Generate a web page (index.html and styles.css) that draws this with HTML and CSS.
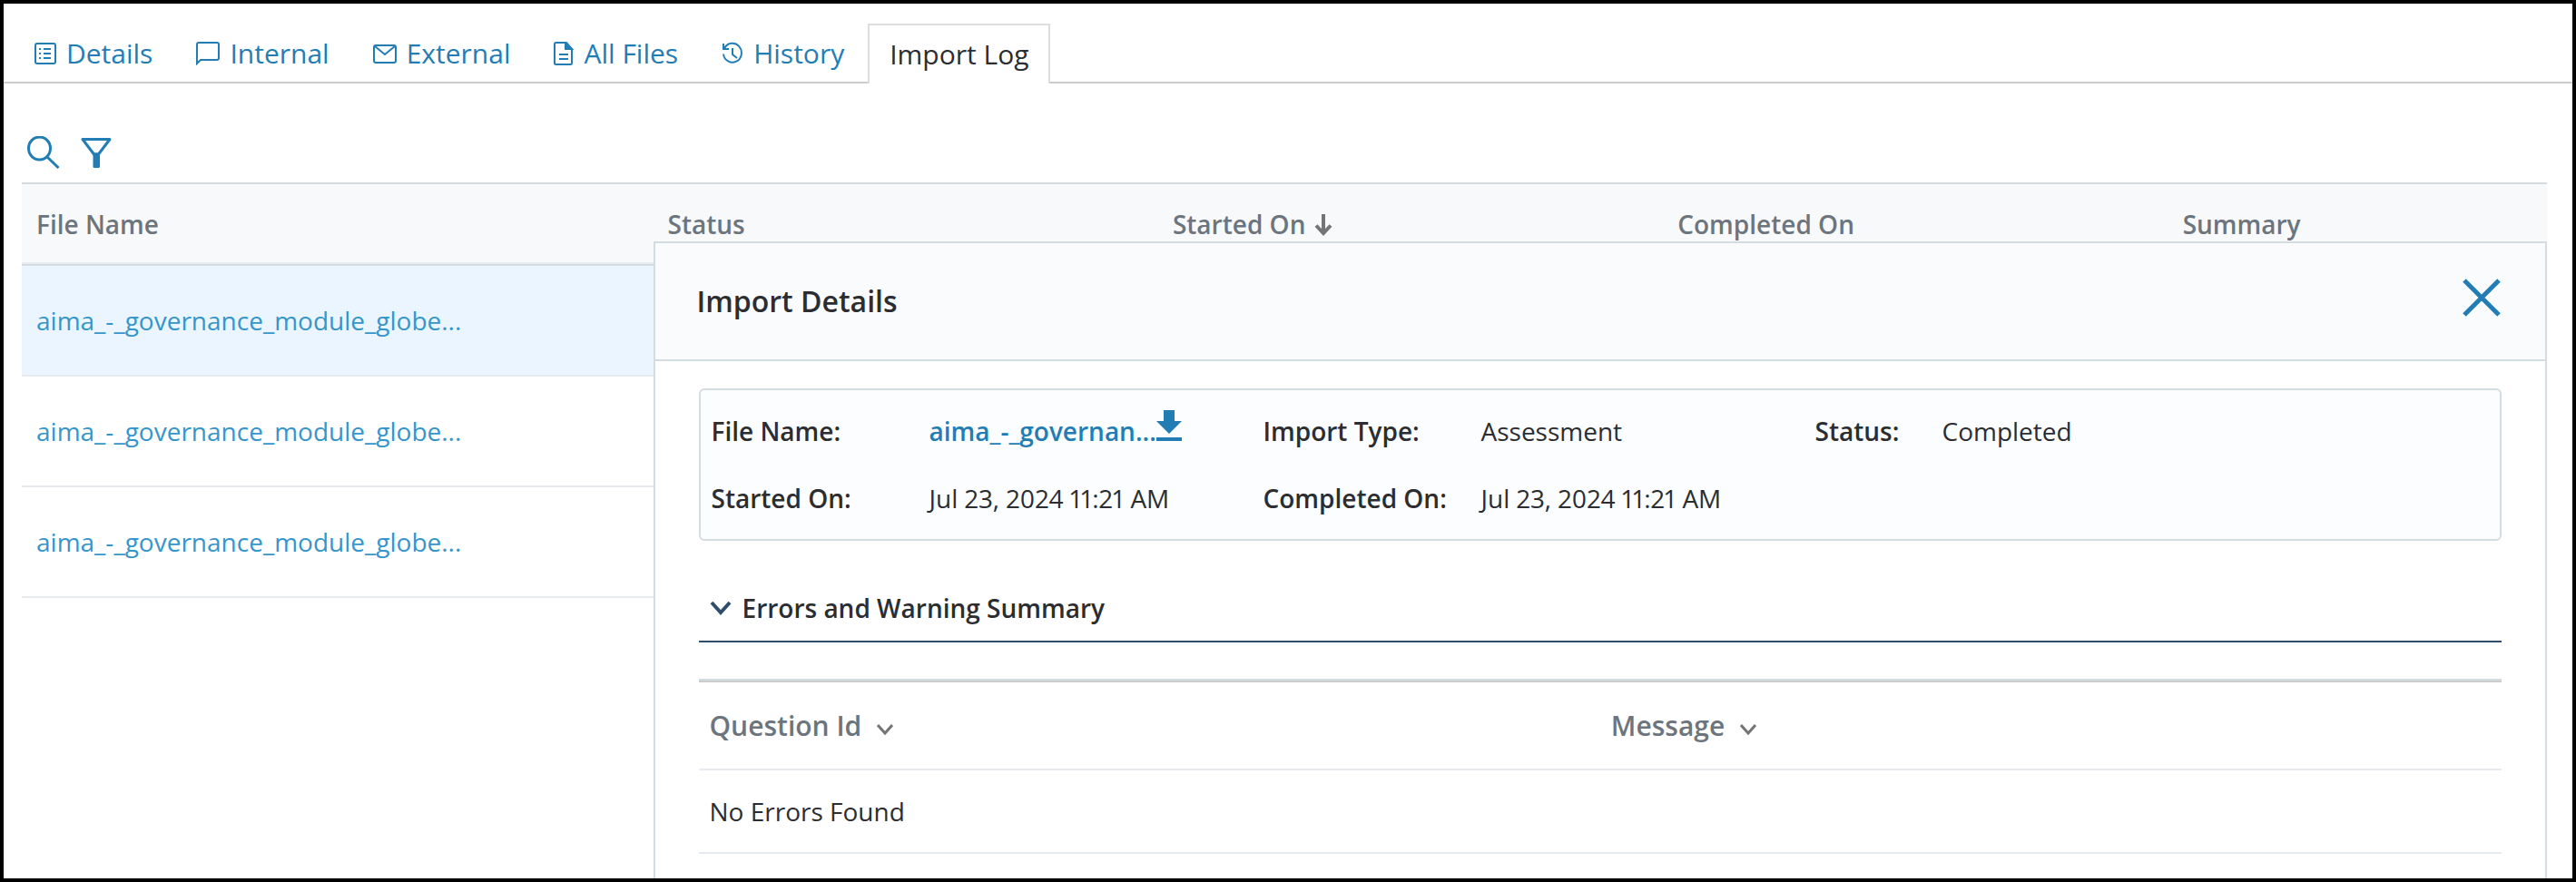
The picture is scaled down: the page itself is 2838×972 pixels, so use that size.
FILE: index.html
```html
<!DOCTYPE html>
<html lang="en">

<head>
    <meta charset="UTF-8">
    <meta name="viewport" content="width=device-width, initial-scale=1.0">
    <title>Import Log</title>
    <link rel="stylesheet" href="styles.css">
</head>

<body>
    <nav class="tabs">
        <a class="tab" href="#details">
            <svg width="24" height="26" viewBox="0 0 24 26" fill="none" stroke="currentColor" stroke-width="2">
                <rect x="1" y="2" width="22" height="22" rx="2" />
                <path d="M5 8h2M5 13h2M5 18h2M10 8h8M10 13h8M10 18h8" />
            </svg>
            Details
        </a>
        <a class="tab" href="#internal">
            <svg width="26" height="26" viewBox="0 0 26 26" fill="none" stroke="currentColor" stroke-width="2">
                <path d="M1 24V3q0-2 2-2h20q2 0 2 2v15q0 2-2 2H5z" />
            </svg>
            Internal
        </a>
        <a class="tab" href="#external">
            <svg width="26" height="26" viewBox="0 0 26 26" fill="none" stroke="currentColor" stroke-width="2">
                <rect x="1" y="4" width="24" height="19" rx="2" />
                <path d="M2 5l11 9 11-9" />
            </svg>
            External
        </a>
        <a class="tab" href="#files">
            <svg width="22" height="26" viewBox="0 0 22 26" fill="none" stroke="currentColor" stroke-width="2">
                <path d="M1 2.500q0-1.500 1.500-1.500H14l6 7v15.500q0 1.500-1.500 1.500h-16q-1.500 0-1.500-1.500z" />
                <path d="M13 1v7h7z" fill="currentColor" />
                <path d="M6 14h10M6 19h10" />
            </svg>
            All Files
        </a>
        <a class="tab" href="#history">
            <svg width="24" height="26" viewBox="0 0 24 26" fill="none" stroke="currentColor" stroke-width="2">
                <path d="M3 7.500A10 10.500 0 1 1 2 13.500M2 2v6h6M12 7v7l5 4" />
            </svg>
            History
        </a>
        <a class="tab active" href="#log">Import Log</a>
    </nav>

    <main class="content">
        <div class="toolbar">
            <button type="button" aria-label="Search">
                <svg width="36" height="36" viewBox="0 0 36 36" fill="none" stroke="currentColor" stroke-width="3">
                    <ellipse cx="13.500" cy="13.500" rx="12" ry="12.500" />
                    <path d="M21.500 22.500L34.500 35" />
                </svg>
            </button>
            <button type="button" aria-label="Filter">
                <svg width="34" height="36" viewBox="0 0 34 36" fill="none" stroke="currentColor" stroke-width="3" stroke-linejoin="round">
                    <path d="M2 3.500h30L19.500 20H14.500z" />
                    <path d="M15 20h4.500v13.500H15z" fill="currentColor" />
                </svg>
            </button>
        </div>

        <div class="log">
            <table class="log-table">
                <thead>
                    <tr>
                        <th class="col-file">File Name</th>
                        <th class="col-mid">Status</th>
                        <th class="col-mid">Started On
                            <svg width="20" height="24" viewBox="0 0 20 24" fill="none" stroke="#757575" stroke-width="4">
                                <path d="M10 0v20M2 12.500l8 8.500 8-8.500" />
                            </svg>
                        </th>
                        <th class="col-mid">Completed On</th>
                        <th>Summary</th>
                    </tr>
                </thead>
                <tbody>
                    <tr class="selected">
                        <td colspan="5"><a href="#import1">aima_-_governance_module_globe...</a></td>
                    </tr>
                    <tr>
                        <td colspan="5"><a href="#import2">aima_-_governance_module_globe...</a></td>
                    </tr>
                    <tr>
                        <td colspan="5"><a href="#import3">aima_-_governance_module_globe...</a></td>
                    </tr>
                </tbody>
            </table>

            <section class="panel">
                <header class="panel-header">
                    <h2>Import Details</h2>
                    <button type="button" aria-label="Close">
                        <svg width="42" height="42" viewBox="0 0 42 42" fill="none" stroke="currentColor" stroke-width="5">
                            <path d="M2 2l38 38M40 2L2 40" />
                        </svg>
                    </button>
                </header>

                <div class="panel-body">
                    <dl class="info">
                        <dt>File Name:</dt>
                        <dd>
                            <a class="download" href="#download">aima_-_governan...<svg width="28" height="34" viewBox="0 0 28 34" fill="currentColor">
                                    <path d="M8 0h12v12h8L14 26 0 12h8zM0 30h28v4H0z" />
                                </svg></a>
                        </dd>
                        <dt>Import Type:</dt>
                        <dd>Assessment</dd>
                        <dt>Status:</dt>
                        <dd>Completed</dd>
                        <dt>Started On:</dt>
                        <dd>Jul 23, 2024 11:21 AM</dd>
                        <dt>Completed On:</dt>
                        <dd>Jul 23, 2024 11:21 AM</dd>
                    </dl>

                    <h3 class="summary-title">
                        <button type="button">
                            <svg width="24" height="16" viewBox="0 0 24 16" fill="none" stroke="#304d6d" stroke-width="4">
                                <path d="M2 2l10 11L22 2" />
                            </svg>
                            Errors and Warning Summary
                        </button>
                    </h3>

                    <table class="errors">
                        <thead>
                            <tr>
                                <th>Question Id
                                    <svg width="18" height="12" viewBox="0 0 18 12" fill="none" stroke="#757575" stroke-width="3">
                                        <path d="M1 1l8 9 8-9" />
                                    </svg>
                                </th>
                                <th>Message
                                    <svg width="18" height="12" viewBox="0 0 18 12" fill="none" stroke="#757575" stroke-width="3">
                                        <path d="M1 1l8 9 8-9" />
                                    </svg>
                                </th>
                            </tr>
                        </thead>
                        <tbody>
                            <tr>
                                <td colspan="2">No Errors Found</td>
                            </tr>
                        </tbody>
                    </table>
                </div>
            </section>
        </div>
    </main>
</body>

</html>
```
FILE: styles.css
```css
* {
    margin: 0;
    padding: 0;
    box-sizing: border-box;
}

body {
    display: flex;
    flex-direction: column;
    min-height: 100vh;
    border: 4px solid black;
    background-color: white;
    color: #2b2d31;
    font-family: "Open Sans", sans-serif;
    font-size: 28px;
    font-variant-numeric: proportional-nums;
    line-height: 40px;
}

a {
    color: #237db5;
    text-decoration: none;
}

button {
    border: none;
    background: none;
    color: #237db5;
    font: inherit;
    cursor: pointer;
}

svg {
    flex-shrink: 0;
}

table {
    width: 100%;
    border-collapse: separate;
    border-spacing: 0;
    table-layout: fixed;
}

th,
td {
    text-align: left;
}

th {
    color: #6c757d;
    font-weight: 600;
}

/* tabs */
.tabs {
    display: flex;
    align-items: flex-end;
    height: 88px;
    padding-left: 10px;
    box-shadow: inset 0 -2px #ccc;
    font-size: 30px;
}

.tab {
    display: flex;
    align-items: center;
    gap: 11px;
    height: 66px;
    padding: 0 24px;
}

.tab.active {
    margin-left: 2px;
    padding: 0 22px;
    border: 2px solid #ddd;
    border-bottom: none;
    background-color: white;
    color: #2b2d31;
}

/* toolbar */
.content {
    display: flex;
    flex: 1;
    flex-direction: column;
    padding: 58px 28px 0 20px;
}

.toolbar {
    display: flex;
    gap: 23px;
    padding: 0 6px 15px;
}

.toolbar svg {
    display: block;
}

/* import log */
.log {
    position: relative;
    flex: 1;
}

.log-table {
    border-top: 2px solid #d3dce0;
}

.log-table th {
    height: 90px;
    padding: 0 16px;
    border-bottom: 2px solid #d3dce0;
    background-color: #f8f9fb;
    box-shadow: inset 0 -2px #e7ebef;
}

.log-table th svg {
    margin-left: 2px;
    vertical-align: -2px;
}

.col-file {
    width: 25%;
}

.col-mid {
    width: 20%;
}

.log-table td {
    height: 122px;
    padding: 0 16px;
    border-bottom: 2px solid #e7ebf0;
}

.log-table td a {
    color: #3695cb;
}

.selected td {
    background-color: #ebf5ff;
}

/* details panel, opens over the log */
.panel {
    position: absolute;
    top: 65px;
    right: 0;
    bottom: 0;
    width: 75%;
    border: 2px solid #d3dce0;
    border-bottom: none;
    background-color: white;
}

.panel-header {
    display: flex;
    align-items: center;
    justify-content: space-between;
    height: 130px;
    padding: 0 49px 0 46px;
    border-bottom: 2px solid #d3dce0;
    background-color: #fafbfd;
}

.panel-header h2 {
    font-size: 32px;
    font-weight: 600;
}

.panel-header button {
    height: 52px;
}

.panel-body {
    padding: 30px 48px 0;
}

.info {
    display: grid;
    grid-template-columns: 240px 368px 240px 368px 140px 1fr;
    row-gap: 34px;
    padding: 25px 12px;
    border: 2px solid #d3dce0;
    border-radius: 6px;
    background-color: #fcfdff;
}

.info dt {
    font-weight: 600;
}

.download {
    font-weight: 600;
}

.download svg {
    margin-top: -10px;
}

.summary-title {
    margin-top: 54px;
    padding-bottom: 16px;
    border-bottom: 2px solid #304d6d;
    font-size: 28px;
    font-weight: 600;
}

.summary-title button {
    display: flex;
    align-items: center;
    gap: 12px;
    padding-left: 12px;
    color: #2b2d31;
}

.errors {
    margin-top: 40px;
    border-top: 2px solid #d3dce0;
}

.errors th,
.errors td {
    padding: 0 12px;
    border-bottom: 2px solid #e7ebef;
}

.errors th {
    height: 99px;
    border-top: 2px solid #ccc;
    font-size: 30px;
}

.errors th svg {
    margin-left: 9px;
    vertical-align: 1px;
}

.errors td {
    height: 92px;
}
```
